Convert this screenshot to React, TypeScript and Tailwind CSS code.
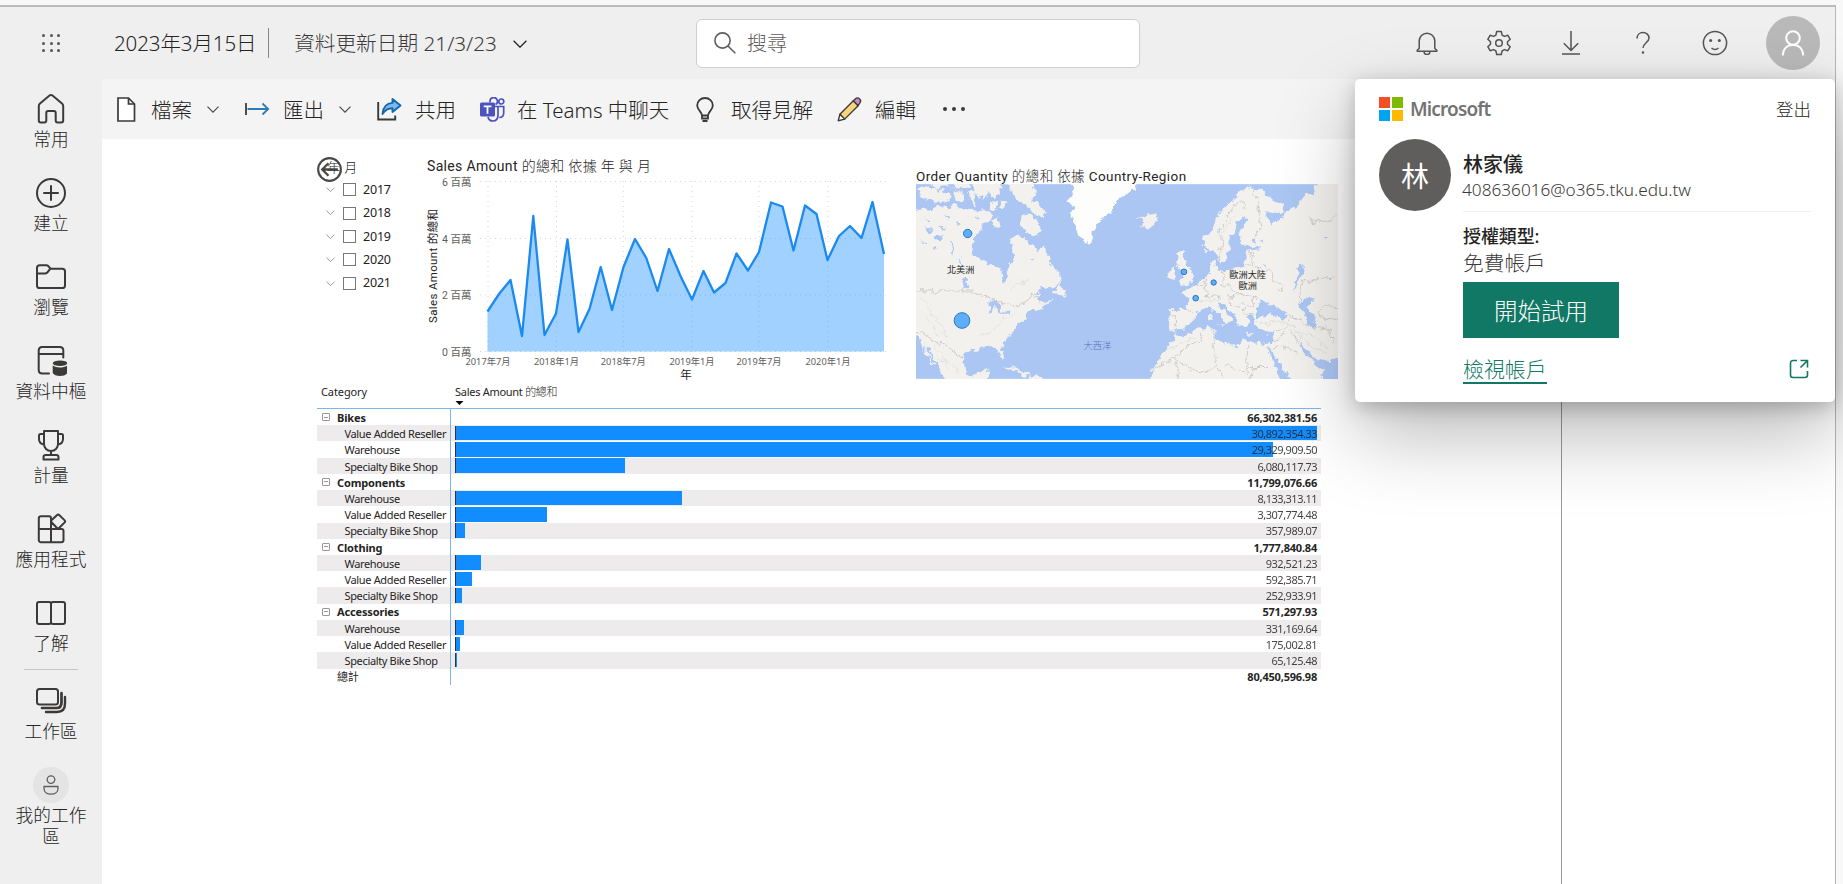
import type { ReactNode } from "react";

const ui = "font-['Noto_Sans','Noto_Sans_CJK_TC',sans-serif]";
const din = "font-['Roboto','Noto_Sans_CJK_TC',sans-serif]";

function Chevron({ className = "" }: { className?: string }) {
  return (
    <svg viewBox="0 0 12 7" className={className} fill="none" stroke="currentColor" strokeWidth="1.1">
      <path d="M.5 .7 6 6.2 11.5 .7" />
    </svg>
  );
}

/* ---------- left navigation ---------- */

function NavIcon({ children }: { children: ReactNode }) {
  return (
    <svg viewBox="0 0 32 32" className="block size-8" fill="none" stroke="#3b3a39" strokeWidth="2" strokeLinejoin="round" strokeLinecap="round">
      {children}
    </svg>
  );
}

const navItems: { label: string; icon: ReactNode }[] = [
  { label: "常用", icon: <path d="M14.500 2.600a2.300 2.300 0 0 1 3 0L27 10.500c.8.700 1.200 1.500 1.200 2.600v14.400c0 1.200-.8 2-2 2h-3.500c-1.200 0-2-.8-2-2V20c0-1.200-.7-1.900-1.800-1.900h-5.800c-1.100 0-1.800.7-1.800 1.900v7.500c0 1.200-.8 2-2 2H5.800c-1.200 0-2-.8-2-2V13.100c0-1.100.4-1.900 1.200-2.600Z" /> },
  { label: "建立", icon: <><circle cx="16" cy="16" r="14" /><path d="M16 9v14M9 16h14" /></> },
  { label: "瀏覽", icon: <path d="M2 7c0-1.700 1-2.700 2.700-2.700h6.600c1 0 1.600.4 2.200 1l2 2.400h11.800c1.700 0 2.700 1 2.700 2.700v14c0 1.700-1 2.700-2.700 2.700H4.700C3 27.100 2 26.100 2 24.400ZM2 12.500h8c1 0 1.700-.4 2.300-1l2.700-3.300" /> },
  {
    label: "資料中樞",
    icon: (
      <>
        <path d="M14 28.500H7.500C5 28.500 3.700 27 3.700 25V5.500C3.700 3.300 5 2 7.200 2h17.600c2.200 0 3.500 1.300 3.500 3.500v7M3.700 9h24.600" />
        <g fill="#3b3a39" stroke="none"><ellipse cx="25" cy="18.300" rx="7.300" ry="2.800" /><path d="M17.700 20.500c3.500 2.600 11 2.600 14.600 0V28c-2 4-12.600 4-14.600 0Z" /></g>
      </>
    ),
  },
  { label: "計量", icon: <path d="M9 2h14v13c0 4-3 7-7 7s-7-3-7-7ZM9 5H5.500C4.400 5 4 5.500 4 6.500V10c0 3 2 5 5 5.500M23 5h3.500c1.100 0 1.500.5 1.500 1.500V10c0 3-2 5-5 5.500M16 22v4M8.500 30.500v-2.300c0-1.300 1-2.200 2.300-2.200h10.400c1.300 0 2.300.9 2.300 2.200v2.300Z" /> },
  { label: "應用程式", icon: <path d="M16 16H3.800V5.500C3.800 4 4.600 3.200 6 3.200h8c1.300 0 2 .7 2 2ZM3.800 16h12.200v13.200H6c-1.400 0-2.200-.8-2.200-2.200ZM16 16h10.500c1.300 0 2 .7 2 2v9c0 1.400-.8 2.200-2.200 2.200H16ZM22.100 2l-5.600 5.300a1.400 1.400 0 0 0 0 2L22 15a1.400 1.400 0 0 0 2 0l5.700-5.600a1.400 1.400 0 0 0 0-2L24.200 2a1.400 1.400 0 0 0-2.100 0Z" /> },
  { label: "了解", icon: <><rect x="2" y="5" width="14" height="22" rx="2" /><rect x="16" y="5" width="14" height="22" rx="2" /></> },
];

function NavItem({ label, icon }: { label: string; icon: ReactNode }) {
  return (
    <div className="flex h-[84px] flex-col items-center">
      <div className="flex h-8 items-center">{icon}</div>
      <div className="mt-[2px] h-6 whitespace-nowrap text-[17.700px] leading-6">{label}</div>
    </div>
  );
}

function SideNav() {
  return (
    <nav className="flex w-[102px] shrink-0 flex-col bg-[#efefef] pt-[14px] font-light text-[#252423]">
      {navItems.map((n) => (
        <NavItem key={n.label} label={n.label} icon={<NavIcon>{n.icon}</NavIcon>} />
      ))}
      <div className="mx-6 -mt-[12px] h-px bg-[#c8c6c4]" />
      <div className="mt-[15px]">
        <NavItem
          label="工作區"
          icon={
            <NavIcon>
              <path d="M26.500 8v9.500c0 3.500-1.800 5.500-5 5.500H7" strokeWidth="2.700" />
              <path d="M30 12v6.500c0 5.200-2.800 8.500-8 8.500H11" strokeWidth="2.400" />
              <rect x="2" y="4" width="21" height="15.500" rx="2.500" />
            </NavIcon>
          }
        />
      </div>
      <div className="-mt-[2px] flex flex-col items-center">
        <div className="flex size-9 items-center justify-center rounded-full bg-[#e4e4e4]">
          <svg viewBox="0 0 16 20" className="h-5 w-4" fill="none" stroke="#605e5c" strokeWidth="1.300">
            <circle cx="8" cy="4.600" r="3.800" />
            <path d="M1 11.500h14v2c0 3.500-3 5.600-7 5.600s-7-2.100-7-5.600Z" strokeLinejoin="round" />
          </svg>
        </div>
        <div className="mt-[2px] w-[72px] text-center text-[17.700px] leading-[21px]">我的工作區</div>
      </div>
    </nav>
  );
}

/* ---------- header ---------- */

function Header() {
  const s = { fill: "none", stroke: "#555453", strokeWidth: 1.5 };
  return (
    <header className="flex h-[72px] shrink-0 items-center bg-[#efefef] font-light text-[#252423]">
      <div className="ml-[42px] grid grid-cols-3 gap-[4.500px]">
        {Array.from({ length: 9 }, (_, i) => (
          <span key={i} className="size-[3px] rounded-full bg-[#555]" />
        ))}
      </div>
      <div className="ml-[54px] w-[154px] whitespace-nowrap pt-px text-[20.500px] tracking-[-.1px]">2023年3月15日</div>
      <div className="h-[30px] w-px bg-[#8a8886]" />
      <div className="ml-[25px] w-[219px] whitespace-nowrap pt-px text-[20.700px] text-[#3b3a39]">資料更新日期 21/3/23</div>
      <Chevron className="mt-[2px] w-[14px]" />
      <div className="ml-[169px] flex h-[49px] w-[444px] items-center rounded-md border border-[#cfcfcf] bg-white pl-[17px] text-[20px] text-[#605e5c]">
        <svg viewBox="0 0 22 22" className="mr-[11px] size-[22px]" fill="none" stroke="#605e5c" strokeWidth="1.600">
          <circle cx="8.500" cy="8.500" r="7.600" />
          <path d="m14 14 7.300 7.300" />
        </svg>
        <span className="pt-px">搜尋</span>
      </div>
      <div className="ml-[275px] flex items-center">
        <svg viewBox="0 0 24 24" className="size-6" {...s}>
          <path d="M4.200 17.500V10a7.800 7.800 0 0 1 15.600 0v7.500l2 1.800v.9H2.200v-.9ZM9 20.500a3 3 0 0 0 6 0" strokeLinejoin="round" />
        </svg>
        <svg viewBox="0 0 26 26" className="ml-[47px] size-[26px]" {...s}>
          <path d="M10.700 1.500h4.600l.8 3.600 2.300 1.300 3.500-1.100 2.300 4-2.700 2.500v2.400l2.700 2.500-2.300 4-3.500-1.100-2.300 1.300-.8 3.600h-4.600l-.8-3.600-2.300-1.300-3.500 1.100-2.300-4 2.700-2.500v-2.400L1.800 9.300l2.300-4 3.500 1.100 2.300-1.300Z" strokeLinejoin="round" />
          <circle cx="13" cy="13" r="3.300" />
        </svg>
        <svg viewBox="0 0 24 24" className="ml-[47px] size-6" {...s}>
          <path d="M12 0v19M4.800 12.300 12 19.500l7.200-7.200M3 23h18" />
        </svg>
        <svg viewBox="0 0 24 24" className="ml-[48px] size-6" {...s}>
          <path d="M6 7.500c0-3.500 2.500-6 6-6s6 2.500 6 5.500c0 4.500-6 5-6 10" />
          <circle cx="12" cy="21.500" r="1.200" fill="#555453" stroke="none" />
        </svg>
        <svg viewBox="0 0 26 26" className="ml-[47px] size-[26px]" {...s}>
          <circle cx="13" cy="13" r="11.600" />
          <g fill="#555453" stroke="none"><circle cx="8.700" cy="10.500" r="1.500" /><circle cx="17.300" cy="10.500" r="1.500" /></g>
          <path d="M9.500 18c2 1.700 5 1.700 7 0" />
        </svg>
        <div className="ml-[38px] flex size-[54px] items-center justify-center rounded-full bg-[#b9b9b9]">
          <svg viewBox="0 0 24 26" className="h-[26px] w-6" fill="none" stroke="white" strokeWidth="2">
            <circle cx="12" cy="8" r="6.800" />
            <path d="M1.800 25.500C2 19 6 15 12 15s10 4 10.200 10.500" />
          </svg>
        </div>
      </div>
    </header>
  );
}

/* ---------- toolbar ---------- */

function Toolbar() {
  return (
    <div className="flex h-[60px] shrink-0 items-center whitespace-nowrap bg-[#f4f4f4] pl-[14px] text-[20.500px] font-light text-[#252423] [&>span]:pt-[2px]">
      <svg viewBox="0 0 20 25" className="h-[25px] w-5" fill="white" stroke="#3b3a39" strokeWidth="1.700">
        <path d="M2 1h10.500L18.500 7v17H2Z" /><path d="M12.500 1v6h6" fill="none" />
      </svg>
      <span className="ml-[15px] w-[56px]">檔案</span>
      <Chevron className="w-[12px] text-[#444]" />
      <svg viewBox="0 0 25 14" className="ml-[26px] h-[14px] w-[25px]" fill="none" strokeWidth="1.800">
        <path d="M1 1v12" stroke="#3b3a39" /><path d="M2.500 7H23M17.500 1.500 23.200 7l-5.700 5.500" stroke="#2f7cb5" />
      </svg>
      <span className="ml-[13px] w-[56px]">匯出</span>
      <Chevron className="w-[12px] text-[#444]" />
      <svg viewBox="0 0 25 24" className="ml-[26px] h-6 w-[25px]" fill="none" strokeWidth="1.900">
        <path d="M1.200 5v17.500h17v-4" stroke="#3b3a39" />
        <path d="M15.500 2 23.500 8.500l-8 6.500v-3.700C11 11.300 8 13 5.500 17 6 10.500 9.500 6.300 15.500 5.900Z" fill="#79b9f2" stroke="#1667a7" strokeLinejoin="round" />
      </svg>
      <span className="ml-[13px] w-[65px]">共用</span>
      <svg viewBox="0 0 25 25" className="size-[25px]">
        <g fill="none" stroke="#4b53bc" strokeWidth="1.700">
          <path d="M10 5.500V4.500a3.700 3.700 0 1 1 5.500 3" />
          <circle cx="21.300" cy="4.500" r="2.500" />
          <path d="M15 9.500h8.700v6.500c0 3-1.500 4.500-4.500 4.500M18 9.500v8.500c0 4-2 6-5 6s-4.500-1.500-5-4" />
        </g>
        <rect x="0" y="5.500" width="15" height="14" rx="1.500" fill="#4b53bc" />
        <path d="M3.700 9.300h7.700M7.500 9.300v7.500" stroke="white" strokeWidth="1.800" />
      </svg>
      <span className="ml-[12px] w-[179px]">在 Teams 中聊天</span>
      <svg viewBox="0 0 18 25" className="h-[25px] w-[18px]" fill="none" stroke="#3b3a39" strokeWidth="1.800">
        <path d="M6 18.500c0-3.500-4.800-5.500-4.800-10a7.800 7.500 0 0 1 15.600 0c0 4.500-4.800 6.500-4.800 10ZM6 18.500v3h6v-3M6.500 24h5" />
      </svg>
      <span className="ml-[17px] w-[106px]">取得見解</span>
      <svg viewBox="0 0 26 26" className="size-[25px]" stroke="#3b3a39" strokeWidth="1.400" strokeLinejoin="round">
        <path d="M3 18 17 4l5 5L8 23Z" fill="#f7d47e" />
        <path d="m17 4 2-2c1.500-1.500 3.500-1 4.500 0s1.500 3 0 4.500L22 9Z" fill="#c58fc9" />
        <path d="M3 18 1.300 24.700 8 23Z" fill="white" />
      </svg>
      <span className="ml-[13px] w-[68px]">編輯</span>
      <div className="flex gap-[5.500px]">
        <i className="size-[3.500px] rounded-full bg-[#3b3a39]" /><i className="size-[3.500px] rounded-full bg-[#3b3a39]" /><i className="size-[3.500px] rounded-full bg-[#3b3a39]" />
      </div>
    </div>
  );
}

/* ---------- report visuals ---------- */

function YearSlicer() {
  return (
    <div className="relative w-[110px] pt-[20px] text-[#252423]">
      <div className="pl-[10px] text-[13px] font-light leading-[16px] tracking-[-.7px]">年, 月</div>
      <div className="mt-[3px]">
        {["2017", "2018", "2019", "2020", "2021"].map((y) => (
          <div key={y} className="flex h-[23.400px] items-center pl-[9px] text-[12.500px] tracking-[-.2px]">
            <Chevron className="w-[9px] text-[#888]" />
            <span className="ml-[8px] mr-[7px] size-[13px] border border-[#777] bg-white" />
            <span className="pt-px">{y}</span>
          </div>
        ))}
      </div>
      <svg viewBox="0 0 24 24" className="absolute left-0 top-[18px] size-[25px]" fill="none" stroke="#4a4846" strokeWidth="2">
        <circle cx="12" cy="12" r="10.900" />
        <path d="M20 12H5.500M11 6l-6 6 6 6" strokeWidth="2.200" />
      </svg>
    </div>
  );
}

const points: [number, number][] = [
  [487.5, 311.5], [499, 294], [510.5, 280], [522, 336], [533.3, 216], [544.5, 335], [556, 313.5], [567.5, 239.5],
  [578.5, 332], [589.5, 309], [600.7, 267], [612, 310], [623.5, 267], [635, 239], [646.3, 258], [657.5, 291],
  [669, 249], [680.5, 276], [692, 299.5], [703.5, 271], [714, 292.5], [725.5, 283], [736.5, 253.5], [748, 270.5],
  [759, 252], [771, 202.5], [782.5, 206.5], [793.5, 250.5], [805, 205.5], [816.5, 214], [827.5, 260], [839, 236],
  [850, 226], [861.5, 238], [872.5, 202], [884, 254],
];

const months: [number, string][] = [
  [488, "2017年7月"], [556.5, "2018年1月"], [623.3, "2018年7月"], [692, "2019年1月"], [759, "2019年7月"], [828, "2020年1月"],
];

function SalesChart() {
  const line = points.map((p) => p.join(" ")).join(" L");
  return (
    <div className={`w-[489px] pt-[17px] ${din}`}>
      <div className="h-[18px] whitespace-nowrap pt-px text-[14px] leading-[18px] tracking-[.33px] text-[#252423]">
        Sales Amount <span className="font-light">的總和 依據 年 與 月</span>
      </div>
      <svg viewBox="427 174 489 210" className="block h-[210px] w-[489px]">
        <g stroke="#d8d8d8" strokeDasharray="1 4">
          {[181.5, 238.5, 295, 351.5].map((y) => <path key={y} d={`M480 ${y}H888`} />)}
          {months.map(([x]) => <path key={x} d={`M${x} 181V352`} />)}
        </g>
        <path d={`M${line} V351.500 H487.500Z`} fill="#118dff" fillOpacity=".4" />
        <path d={`M${line}`} fill="none" stroke="#1a8af0" strokeWidth="2.300" strokeLinejoin="round" />
        <g fontSize="10.500" fill="#605e5c" textAnchor="end">
          <text x="471.500" y="185.500">6 百萬</text>
          <text x="471.500" y="242.500">4 百萬</text>
          <text x="471.500" y="298.500">2 百萬</text>
          <text x="471.500" y="355.500">0 百萬</text>
        </g>
        <g fontSize="9.600" fill="#605e5c" textAnchor="middle" fontFamily="Noto Sans, Noto Sans CJK TC, sans-serif">
          {months.map(([x, t]) => <text key={t} x={x} y="365" textLength="45" lengthAdjust="spacingAndGlyphs">{t}</text>)}
        </g>
        <text x="686" y="379" fontSize="11.500" fill="#252423" textAnchor="middle">年</text>
        <text transform="translate(436.500 266) rotate(-90)" fontSize="11.500" fill="#252423" textAnchor="middle" textLength="114">Sales Amount 的總和</text>
      </svg>
    </div>
  );
}

function WorldMap() {
  return (
    <div className={`w-[422px] pt-[28px] ${din}`}>
      <div className="h-[17px] whitespace-nowrap pt-px text-[13.500px] leading-[17px] tracking-[.4px] text-[#252423]">
        Order Quantity <span className="font-light">的總和 依據</span> Country-Region
      </div>
      <svg viewBox="48 102 1266 584" className="block h-[195px] w-[422px]">
        <defs>
          <filter id="coast" x="-5%" y="-5%" width="110%" height="110%">
            <feTurbulence type="fractalNoise" baseFrequency=".05" numOctaves="3" seed="4" />
            <feDisplacementMap in="SourceGraphic" scale="26" xChannelSelector="R" yChannelSelector="G" />
          </filter>
        </defs>
        <rect x="48" y="102" width="1266" height="584" fill="#abc6f3" />
        <g filter="url(#coast)">
          <g fill="#f2f1ee">
            <path d="M20 190 70 175 95 180 110 165 140 172 165 160 190 178 215 172 235 187 250 176 262 190 275 200 262 215 245 222 240 240 222 262 215 290 222 318 245 330 270 345 300 352 303 375 312 395 324 382 322 350 340 330 345 318 330 295 335 265 350 253 375 262 395 285 410 300 430 290 440 315 455 345 480 372 484 392 460 408 425 415 400 430 418 432 412 450 430 462 455 448 425 478 400 475 385 485 375 500 350 520 345 545 325 560 305 585 302 598 316 620 310 632 298 612 285 595 260 590 240 597 215 600 195 612 192 640 200 670 215 680 235 672 245 660 268 658 265 720 150 720 90 600 60 565 20 540Z" />
            <path d="M60 565 72 570 82 605 105 645 98 645 75 605Z" />
            <path d="M310 90 400 90 405 130 400 150 425 170 440 195 420 200 395 185 375 165 355 150 335 125Z" />
            <path d="M365 195 385 190 410 208 425 240 410 262 385 250 360 225ZM272 205 295 200 302 232 285 235ZM55 112 85 105 130 125 150 120 152 150 110 158 75 150 60 140ZM90 90 140 90 145 110 110 115ZM155 95 205 92 210 112 170 115ZM160 125 190 120 195 150 170 155ZM215 90 295 85 300 130 280 150 270 125 250 150 230 130ZM205 120 230 125 225 165 205 150ZM305 150 320 155 315 175 300 170ZM270 155 290 160 285 185 270 180ZM462 425 478 395 500 425 500 440 485 435 465 432Z" />
            <path d="M310 652 345 655 390 675 375 680 335 662ZM385 678 430 680 430 700 380 700Z" />
            <path d="M712 198 730 207 742 192 765 194 777 212 745 238 722 230 728 215Z" />
            <path d="M832 312 852 306 852 330 862 350 882 378 878 396 845 405 838 395 850 380 842 360 832 340ZM803 366 826 348 832 378 806 390Z" />
            <path d="M808 480 860 478 868 450 845 425 870 412 890 402 915 382 930 372 930 335 945 330 950 360 975 365 1000 355 1030 350 1040 320 1035 300 1085 297 1070 285 1048 290 1025 285 1018 245 1035 215 1045 205 1030 200 1015 212 1000 250 988 268 990 290 978 330 962 342 945 300 925 308 908 280 912 260 945 230 955 190 985 160 1020 125 1050 112 1080 115 1100 135 1145 160 1152 185 1120 192 1092 185 1112 220 1135 212 1150 190 1190 165 1210 150 1215 125 1240 133 1250 90 1350 80 1350 720 750 720 758 655 790 610 815 578 828 545 808 535 812 510Z" />
          </g>
          <path d="M505 90 730 90 690 125 655 150 635 180 600 215 582 240 572 278 560 280 540 262 530 235 515 195 522 170 505 150 525 130Z" fill="#fdfdfc" />
          <g fill="#abc6f3">
            <path d="M828 538 850 535 873 515 887 492 912 474 935 468 955 455 975 462 990 480 1010 500 1020 532 1045 525 1040 498 1062 492 1062 525 1095 542 1122 546 1112 582 1070 578 1030 568 1015 592 975 575 948 568 940 532 900 535 860 552 830 560Z" />
            <path d="M1068 475 1085 450 1105 458 1100 472 1125 463 1168 496 1150 506 1110 495 1072 502Z" />
            <path d="M1198 462 1225 440 1242 450 1225 470 1247 500 1242 532 1220 530 1218 500Z" />
            <path d="M1100 588 1113 600 1168 680 1170 710 1150 710ZM1198 580 1225 602 1245 628 1270 635 1350 628 1350 720 1240 720 1278 660 1245 640 1215 610Z" />
            <path d="M262 452 290 450 306 470 298 492 290 480 280 462 275 490 268 490ZM300 490 330 480 325 488 302 496ZM185 385 195 380 205 412 197 418ZM150 270 156 270 165 312 158 310ZM100 262 130 255 128 264 105 270ZM70 235 100 238 95 246ZM1050 275 1070 268 1072 280ZM1080 268 1088 266 1090 280ZM1200 340 1215 350 1190 400 1180 430 1183 400Z" />
            <path d="M1085 345 1095 343 1093 350ZM950 235 958 240 955 250ZM130 195 150 200 148 206ZM75 205 90 210 88 216ZM165 215 182 220 175 226ZM225 205 236 200 238 208ZM392 330 402 326 400 336ZM1270 265 1285 262 1285 272ZM1280 390 1292 388 1290 396ZM60 270 85 278 80 284ZM120 225 135 232 130 240ZM95 290 112 296 105 302ZM180 320 186 335 180 345Z" />
          </g>
          <g fill="#f2f1ee">
            <path d="M922 462 950 455 960 472 985 495 996 510 978 522 968 500 945 482ZM955 522 975 522 972 532ZM928 495 938 495 936 515 928 515ZM932 478 938 478 936 492ZM1035 548 1058 550 1040 555ZM1098 555 1112 550 1105 560Z" />
          </g>
          <g fill="none" stroke="#bdb8b4" strokeWidth="2">
            <path d="M30 422H218L262 440 300 455 340 472 385 452 392 435 412 440 420 460M50 545 85 560 120 580 150 590 165 610 195 628" />
            <path d="M955 340 965 285 960 240 1000 170 1025 150M1025 150 1035 180M1060 115 1078 180 1082 230 1070 260M1045 300 1060 320 1055 350M1065 340 1080 360 1110 365 1120 390 1148 405 1140 425M970 365 972 395M920 385 915 412 920 430 912 440M890 400 915 420M915 440 940 435 960 440M960 400 985 405 1000 425 1020 430M985 440 1000 440 1020 430 1060 435 1070 455M1060 435 1060 465M1000 440 990 455 1005 470 1020 475M1020 460 1065 470M1030 470 1032 488 1060 490M810 495 825 495 828 530M860 478 880 488M1120 545 1155 535 1170 510 1190 505M1165 495 1195 510M1170 535 1185 560 1200 575M1190 505 1220 530 1255 535 1290 540 1300 580M1195 462 1210 390 1250 395 1270 380 1314 385M1255 480 1260 500 1314 510M1260 480 1290 460 1314 480M1120 575 1135 570 1150 545M1118 598 1145 585 1195 610M1225 190 1240 220 1310 200M1010 340 1045 345" />
            <path d="M900 545 905 570 858 590 830 620 760 655M830 625 832 686M830 630 905 672 950 645M938 540 942 580 950 640M950 645 975 690M975 645 1040 670 1043 585M1043 652H1110M1060 655 1050 686" />
          </g>
          <g stroke="#dcd9d4" strokeWidth="2" fill="none">
            <path d="M60 440 85 460 95 490 120 520 140 560M75 500 105 540 115 560M110 620 150 640 175 665M100 590 130 620 150 660M280 540 310 510 340 490M240 560 270 545M1060 515 1100 520 1140 512 1190 530M1180 525 1200 560 1240 590 1280 610M1190 545 1240 560 1290 600M960 290 975 240 1000 200M330 420 360 400 390 390M145 110 195 130M800 600 840 580 890 560M1270 520 1300 560M900 455 920 450 960 448" />
          </g>
        </g>
        <g fill="#5eaefb" stroke="#2b78c2" strokeWidth="3">
          <circle cx="203" cy="250" r="12.500" /><circle cx="186" cy="511" r="23.500" />
          <circle cx="852" cy="365" r="8.500" /><circle cx="941" cy="397" r="8" /><circle cx="887" cy="444" r="8.500" />
        </g>
        <g fontSize="27.500" fill="#252423" textAnchor="middle" stroke="#f2f1ee" strokeWidth="4" paintOrder="stroke">
          <text x="182" y="370">北美洲</text><text x="1043" y="385">歐洲大陸</text><text x="1043" y="416">歐洲</text>
        </g>
        <text x="592" y="596" fontSize="27.500" fill="#5273b8" fontWeight="300" textAnchor="middle">大西洋</text>
      </svg>
    </div>
  );
}

type Row = { name: string; text: string; value?: number };
const rows: Row[] = [
  { name: "Bikes", text: "66,302,381.56" },
  { name: "Value Added Reseller", text: "30,892,354.33", value: 30892354 },
  { name: "Warehouse", text: "29,329,909.50", value: 29329909 },
  { name: "Specialty Bike Shop", text: "6,080,117.73", value: 6080117 },
  { name: "Components", text: "11,799,076.66" },
  { name: "Warehouse", text: "8,133,313.11", value: 8133313 },
  { name: "Value Added Reseller", text: "3,307,774.48", value: 3307774 },
  { name: "Specialty Bike Shop", text: "357,989.07", value: 357989 },
  { name: "Clothing", text: "1,777,840.84" },
  { name: "Warehouse", text: "932,521.23", value: 932521 },
  { name: "Value Added Reseller", text: "592,385.71", value: 592385 },
  { name: "Specialty Bike Shop", text: "252,933.91", value: 252933 },
  { name: "Accessories", text: "571,297.93" },
  { name: "Warehouse", text: "331,169.64", value: 331169 },
  { name: "Value Added Reseller", text: "175,002.81", value: 175002 },
  { name: "Specialty Bike Shop", text: "65,125.48", value: 65125 },
  { name: "總計", text: "80,450,596.98" },
];

function Matrix() {
  return (
    <div className="w-[1004px] text-[11px] text-[#252423]">
      <div className="flex h-[25px] border-b border-[#7fb6ea]">
        <div className="w-[138px] pl-[4px] leading-4 tracking-[-.1px]">Category</div>
        <div className="leading-4 tracking-[-.28px]">
          Sales Amount <span className="font-light">的總和</span>
          <svg viewBox="0 0 8 4" className="mt-px block h-[4px] w-[9px]"><path d="M0 0h8L4 4Z" /></svg>
        </div>
      </div>
      {rows.map((r, i) => {
        const group = r.value === undefined;
        const total = i === rows.length - 1;
        return (
          <div key={i} className={`flex h-[16.220px] items-center ${i % 2 ? "bg-[#edebeb]" : ""}`}>
            <div className={`flex h-full w-[134px] shrink-0 items-center whitespace-nowrap border-r border-[#7fb6ea] ${group ? "pl-[5px] font-bold tracking-[-.15px]" : "pl-[27.500px] tracking-[-.35px]"}`}>
              {group && !total && (
                <span className="mr-[7px] flex size-[8px] items-center rounded-[1px] border border-[#999] px-px"><i className="h-px w-full bg-[#999]" /></span>
              )}
              <span className={`pt-[2px] ${total ? "pl-[15px] font-normal" : ""}`}>{r.name}</span>
            </div>
            <div className="relative ml-[4px] mr-[4px] flex h-full flex-1 items-center justify-end">
              {!group && (
                <div className="absolute left-0 top-[.5px] h-[14.700px] border-l border-[#333] bg-[#118dff]" style={{ width: `${(r.value! / 30892354) * 100}%` }} />
              )}
              <span className={`relative pt-[2px] ${group ? "font-bold tracking-[-.2px]" : "tracking-[-.5px] opacity-85"}`}>{r.text}</span>
            </div>
          </div>
        );
      })}
    </div>
  );
}

/* ---------- account panel ---------- */

function AccountPanel() {
  return (
    <aside className="absolute left-[1355px] top-[79px] h-[323px] w-[480px] rounded-[5px] bg-white pl-[24px] pr-[24px] pt-[15px] shadow-[0_32px_80px_rgba(0,0,0,.28),0_5px_20px_rgba(0,0,0,.22)]">
      <div className="flex h-[30px] items-center">
        <div className="grid grid-cols-2 gap-[1.500px]">
          <i className="size-[11.250px] bg-[#f25022]" /><i className="size-[11.250px] bg-[#7fba00]" />
          <i className="size-[11.250px] bg-[#00a4ef]" /><i className="size-[11.250px] bg-[#ffb900]" />
        </div>
        <span className="ml-[7px] text-[19px] font-semibold tracking-[-.85px] text-[#737373]">Microsoft</span>
        <span className="ml-auto text-[17.500px] font-light text-[#252423]">登出</span>
      </div>
      <div className="mt-[15px] flex">
        <div className="flex size-[72px] items-center justify-center rounded-full bg-[#605e5c] pt-[2px] text-[28px] text-white">林</div>
        <div className="ml-[12px] h-[73px] flex-1 border-b border-[#f1f0ef]">
          <div className="mt-[13px] h-[26px] text-[20px] font-medium leading-[26px] text-[#252423]">林家儀</div>
          <div className="-ml-px text-[17.200px] font-light leading-[24px] text-[#3b3a39]">408636016@o365.tku.edu.tw</div>
        </div>
      </div>
      <div className="flex flex-col items-start pl-[84px]">
        <div className="mt-[12px] text-[18px] font-medium leading-[24px] tracking-[-.1px] text-[#252423]">授權類型:</div>
        <div className="mt-[2px] text-[20.700px] font-light leading-[26px] text-[#3b3a39]">免費帳戶</div>
        <button className="mt-[6px] h-[56px] w-[156px] bg-[#117865] pt-[3px] text-[23.500px] font-light text-white">開始試用</button>
        <div className="mt-[19px] flex w-full items-center justify-between text-[#117865]">
          <a className="border-b-2 border-[#117865] text-[20.900px] font-light leading-[25px]">檢視帳戶</a>
          <svg viewBox="0 0 20 20" className="mr-[2px] mt-[-3px] size-5" fill="none" stroke="currentColor" strokeWidth="1.600">
            <path d="M8 1.500H4A2.500 2.500 0 0 0 1.500 4v12A2.500 2.500 0 0 0 4 18.500h12a2.500 2.500 0 0 0 2.500-2.500v-4M11.500 1.500h7v7M18.500 1.500l-7 7" />
          </svg>
        </div>
      </div>
    </aside>
  );
}

export default function App() {
  return (
    <div className={`relative flex h-[884px] w-[1843px] flex-col overflow-hidden bg-[#f8f8f8] ${ui}`}>
      <div className="h-[5px] shrink-0" />
      <div className="flex w-[1836px] flex-1 flex-col border-r border-t-2 border-r-[#b5b5b5] border-t-[#bbbbbb] bg-white">
        <Header />
        <div className="flex flex-1">
          <SideNav />
          <main className="flex flex-1 flex-col">
            <Toolbar />
            <div className="flex flex-1">
              <section className="w-[1460px] border-r border-[#9a9a9a] pl-[215px]">
                <div className="flex h-[245px]">
                  <YearSlicer />
                  <SalesChart />
                  <WorldMap />
                </div>
                <Matrix />
              </section>
            </div>
          </main>
        </div>
      </div>
      <AccountPanel />
    </div>
  );
}
